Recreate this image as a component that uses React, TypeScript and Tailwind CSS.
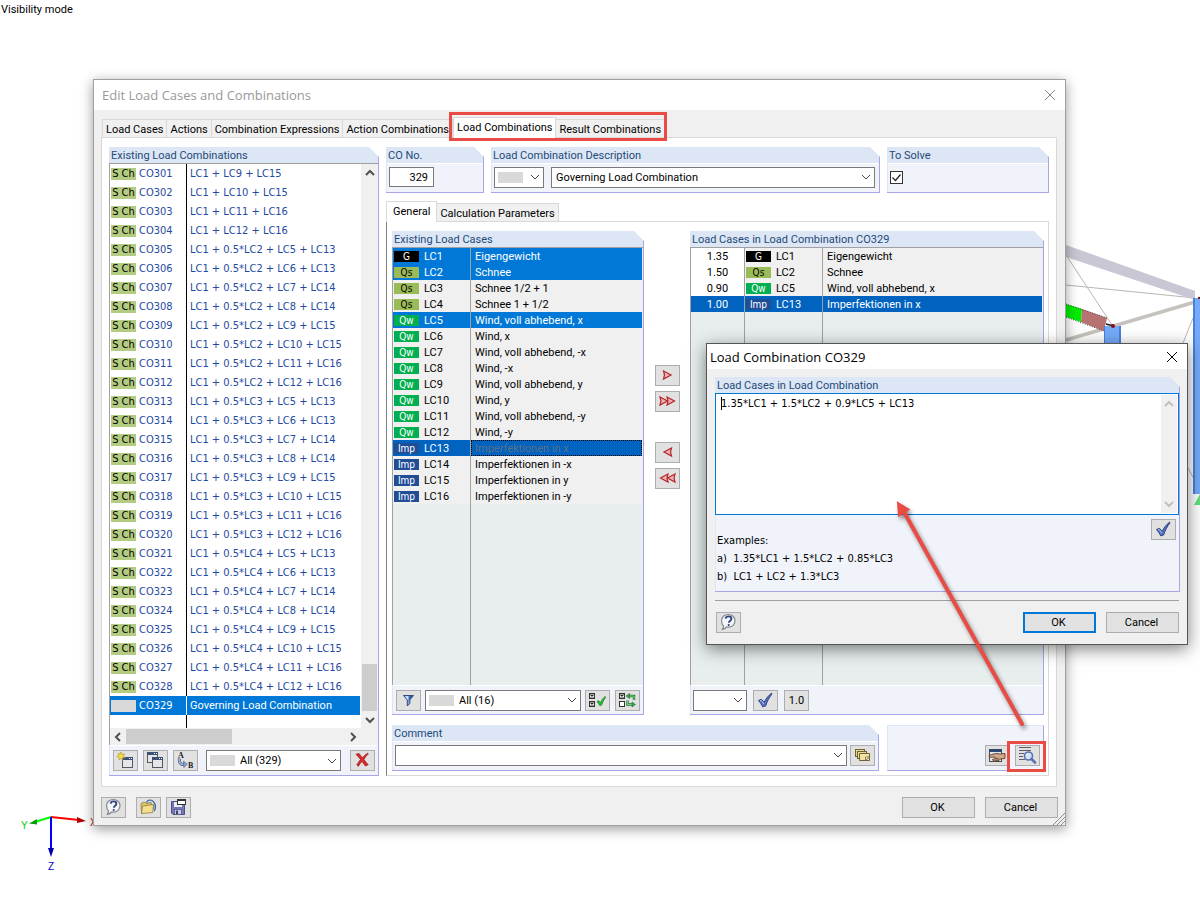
import React, { useState } from 'react';

/* ---------------- DATA ---------------- */
type Kind = 'G' | 'Qs' | 'Qw' | 'Imp';

interface LoadCase {
  kind: Kind;
  id: string;
  name: string;
  factor?: string;
}

const KIND_STYLE: Record<Kind, string> = {
  G: 'bg-black text-white',
  Qs: 'bg-[#9bbb59] text-black',
  Qw: 'bg-[#00b050] text-white',
  Imp: 'bg-[#1f4e97] text-white',
};

const LOAD_CASES: LoadCase[] = [
  { kind: 'G', id: 'LC1', name: 'Eigengewicht' },
  { kind: 'Qs', id: 'LC2', name: 'Schnee' },
  { kind: 'Qs', id: 'LC3', name: 'Schnee 1/2 + 1' },
  { kind: 'Qs', id: 'LC4', name: 'Schnee 1 + 1/2' },
  { kind: 'Qw', id: 'LC5', name: 'Wind, voll abhebend, x' },
  { kind: 'Qw', id: 'LC6', name: 'Wind, x' },
  { kind: 'Qw', id: 'LC7', name: 'Wind, voll abhebend, -x' },
  { kind: 'Qw', id: 'LC8', name: 'Wind, -x' },
  { kind: 'Qw', id: 'LC9', name: 'Wind, voll abhebend, y' },
  { kind: 'Qw', id: 'LC10', name: 'Wind, y' },
  { kind: 'Qw', id: 'LC11', name: 'Wind, voll abhebend, -y' },
  { kind: 'Qw', id: 'LC12', name: 'Wind, -y' },
  { kind: 'Imp', id: 'LC13', name: 'Imperfektionen in x' },
  { kind: 'Imp', id: 'LC14', name: 'Imperfektionen in -x' },
  { kind: 'Imp', id: 'LC15', name: 'Imperfektionen in y' },
  { kind: 'Imp', id: 'LC16', name: 'Imperfektionen in -y' },
];

const ASSIGNED: LoadCase[] = [
  { kind: 'G', id: 'LC1', name: 'Eigengewicht', factor: '1.35' },
  { kind: 'Qs', id: 'LC2', name: 'Schnee', factor: '1.50' },
  { kind: 'Qw', id: 'LC5', name: 'Wind, voll abhebend, x', factor: '0.90' },
  { kind: 'Imp', id: 'LC13', name: 'Imperfektionen in x', factor: '1.00' },
];

const WIND_PAIRS = [
  'LC5 + LC13',
  'LC6 + LC13',
  'LC7 + LC14',
  'LC8 + LC14',
  'LC9 + LC15',
  'LC10 + LC15',
  'LC11 + LC16',
  'LC12 + LC16',
];

const COMBINATIONS = [
  ...WIND_PAIRS.slice(4).map((pair) => `LC1 + ${pair}`),
  ...['LC2', 'LC3', 'LC4'].flatMap((snow) => WIND_PAIRS.map((pair) => `LC1 + 0.5*${snow} + ${pair}`)),
  'Governing Load Combination',
].map((text, i) => ({ no: `CO${301 + i}`, text }));

/* ---------------- ICONS ---------------- */
// every button icon is drawn on the 23x19 face of its button
const Face: React.FC<{ children: React.ReactNode }> = ({ children }) => (
  <svg viewBox="0 0 23 19" className="block w-[23px] h-[19px]" aria-hidden="true">
    {children}
  </svg>
);

const MiniWindow: React.FC<{ x: number; y: number }> = ({ x, y }) => (
  <g>
    <rect x={x + 0.5} y={y + 0.5} width="10" height="10" fill="#e4e6ea" stroke="#55585e" />
    <rect x={x} y={y} width="11" height="3" fill="#3c4f74" />
    <rect x={x + 7} y={y + 1} width="1" height="1" fill="#fff" />
    <rect x={x + 9} y={y + 1} width="1" height="1" fill="#fff" />
  </g>
);

const NewIcon = () => (
  <Face>
    <MiniWindow x={8} y={6} />
    <path d="M7 1l1 2.6 2.6-.8-1.5 2.2 2.1 1.6-2.7.2L8.400 9.400 7 7.200 5 9l.2-2.700L2.800 5.600l2.300-1.200L4 2.300l2.200 1z" fill="#f7dc4a" stroke="#b8941c" strokeWidth=".6" />
  </Face>
);

const CopyIcon = () => (
  <Face>
    <MiniWindow x={3} y={1} />
    <MiniWindow x={8} y={6} />
  </Face>
);

const RenumberIcon = () => (
  <Face>
    <text x="4" y="7" fontSize="8" fontWeight="700" fontFamily="Liberation Serif, serif" fill="#222">A</text>
    <text x="14" y="17" fontSize="8" fontWeight="700" fontFamily="Liberation Serif, serif" fill="#222">B</text>
    <path d="M5.500 7.500c-.8 4 1.500 6.500 5 6" fill="none" stroke="#51648f" strokeWidth="3" />
    <path d="M5.500 7.500c-.8 4 1.500 6.500 5 6" fill="none" stroke="#a9b9db" strokeWidth="1.400" />
    <path d="M9.500 10.200l3.800 3-3.500 3.300z" fill="#8ea3cf" stroke="#51648f" strokeWidth=".7" />
  </Face>
);

const DeleteIcon = () => (
  <Face>
    <path d="M5 3.200l3-.7c1.200 1.500 2.200 3 3.300 4.300 1.500-1.700 3.200-3.300 5.200-4.600l.8.600c-1.800 1.800-3.200 3.600-4.400 5.500 1.200 1.900 2.600 3.700 4.300 5.400l-2.800 1.300c-1.300-1.500-2.400-3.100-3.400-4.700-1.300 1.600-2.500 3.200-3.700 5l-1.500-1.300c1-1.900 2.300-3.700 3.700-5.500C8.200 6.800 6.800 5 5 3.200z" fill="#de2a2a" stroke="#8f1414" strokeWidth=".7" />
  </Face>
);

const HelpIcon = () => (
  <Face>
    <path d="M11.300 1.500c4 0 6.700 2.700 6.700 6.300s-2.700 6.400-6.700 6.400c-.6 0-1.200-.1-1.700-.2-1.300 1.500-2.700 2.300-4.300 2.500.8-1 1.200-2.200 1.200-3.500C5.200 11.800 4.600 10 4.600 7.800c0-3.600 2.700-6.300 6.700-6.300z" fill="#f4f6fa" stroke="#85878d" strokeWidth="1.200" />
    <path d="M8.600 5.600c.3-1.500 1.400-2.200 2.900-2.200 1.700 0 2.900.9 2.900 2.300 0 1.300-.9 1.800-1.600 2.400-.6.500-.9.900-.9 1.600" fill="none" stroke="#2d4480" strokeWidth="1.900" />
    <circle cx="11.700" cy="12" r="1.100" fill="#2d4480" />
  </Face>
);

const OpenIcon = () => (
  <Face>
    <path d="M9 4.500c2-3.500 7-3.300 8.800.8.900 2.200.9 5-.3 8" fill="#8fabd6" stroke="#35578f" />
    <path d="M11 4.500c2-1.500 4-1 5 1.500" fill="none" stroke="#e3ecf9" strokeWidth="1.200" />
    <path d="M4.500 15.500l-.5-10 3.500-1.500 1.500 1.500 5-1 .8 3.500z" fill="#e0c967" stroke="#93793a" strokeWidth=".8" />
    <path d="M4.500 15.500l1-7.500 11-1.500-.8 8z" fill="#f3e08e" stroke="#93793a" strokeWidth=".8" />
  </Face>
);

const SaveIcon = () => (
  <Face>
    <path d="M4.500 3.500h13v13H6l-1.500-1.500z" fill="#7377b8" stroke="#4a4e86" />
    <rect x="7" y="4" width="8" height="5" fill="#eceef6" />
    <rect x="7.500" y="11.500" width="7" height="5" fill="#c9ccdc" stroke="#3b3f74" strokeWidth=".6" />
    <rect x="9" y="12.500" width="2" height="3.500" fill="#3b3f74" />
    <rect x="10.500" y="1.500" width="8" height="5" fill="#fff" stroke="#333" />
    <rect x="10" y="1" width="9" height="2" fill="#333" />
  </Face>
);

const FilterIcon = () => (
  <Face>
    <path d="M6.500 4.500h10L12.800 9v3.500L10.300 15V9z" fill="#7ba3e6" stroke="#23406f" strokeWidth=".9" />
    <path d="M8 5.300h3L11 9z" fill="#d6e5fb" />
    <path d="M12 9.500l3.500-4.500h-3z" fill="#2d5296" />
  </Face>
);

const TickBox: React.FC<{ x: number; y: number; ticked?: boolean }> = ({ x, y, ticked }) => (
  <g>
    <rect x={x + 0.5} y={y + 0.5} width="5" height="5" fill="#fff" stroke="#333" />
    {ticked && <path d={`M${x + 1.5} ${y + 1.500}l3 3m0-3l-3 3`} stroke="#222" strokeWidth="1.200" />}
  </g>
);

const SelectAllIcon = () => (
  <Face>
    <TickBox x={3} y={2} ticked />
    <TickBox x={3} y={10} ticked />
    <path d="M11 10.500l1.800-.8 1.600 2.200c1-2.500 2.500-4.600 4.600-6.400l.7.500c-1.800 2.500-3.200 5.200-4.200 8.200l-1.800.3c-.8-1.500-1.700-2.800-2.700-4z" fill="#23c437" stroke="#14751f" strokeWidth=".7" />
  </Face>
);

const InvertIcon = () => (
  <Face>
    <TickBox x={3} y={2} ticked />
    <TickBox x={3} y={10} />
    <path d="M12.500 5h5.500v4M11.500 9.500v4H17" fill="none" stroke="#1f7a2e" strokeWidth="2.400" />
    <path d="M12.500 5h5.500v4M11.500 9.500v4H17" fill="none" stroke="#86d890" strokeWidth=".9" />
    <path d="M13.500 2.500L10 5l3.500 2.500zM16 11l3.500 2.500L16 16z" fill="#3fa84e" stroke="#1f6f2c" strokeWidth=".6" />
  </Face>
);

const ApplyIcon = () => (
  <Face>
    <path d="M4.500 9.500l3-1.200 2.600 3.200c1.600-3.600 4-6.600 7.400-9.300l.6.500c-2.900 3.800-5.100 7.800-6.500 12.300l-2.900.8C7.500 13.300 6.100 11.300 4.500 9.500z" fill="#5577cc" stroke="#24366e" strokeWidth=".9" />
    <path d="M6 9.800l1.200-.4L9.800 13" fill="none" stroke="#b6c8f2" strokeWidth=".9" />
  </Face>
);

const NotesIcon = () => (
  <Face>
    <rect x="4.500" y="3.500" width="9" height="7" fill="#e8d894" stroke="#6f6233" />
    <rect x="6.500" y="5.500" width="9" height="7" fill="#e8d894" stroke="#6f6233" />
    <path d="M8.500 7.500h10v7h-10z" fill="#f1e3a6" stroke="#6f6233" />
    <path d="M14.500 14.500v-3.500h4z" fill="#fff8d4" stroke="#6f6233" strokeWidth=".8" />
  </Face>
);

const HandIcon = () => (
  <Face>
    <rect x="3.500" y="3.500" width="12" height="12" fill="#e6e8ec" stroke="#4a4d52" />
    <rect x="3" y="3" width="13" height="3" fill="#2f4670" />
    <path d="M3 9.500c3-1.200 5.500-1.800 8-2l3 .5 5-.5v5l-4 .3-3 2-4.500.2-1-1.500 3-1-.6-1.500-5.400.3z" fill="#d2a98b" stroke="#5b3d2b" strokeWidth=".9" />
    <path d="M9 12.800l4-.6M9.500 14.200l3-.4" stroke="#5b3d2b" strokeWidth=".7" />
  </Face>
);

const InspectIcon = () => (
  <Face>
    <path d="M3 1.500h12M3 4.500h12M3 7.500h5M3 10.500h4M3 13.500h6" stroke="#5c5f66" />
    <circle cx="12.500" cy="10" r="4" fill="#d4e1f7" stroke="#5873b0" strokeWidth="1.600" />
    <path d="M15.500 13l3.500 3.500" stroke="#5873b0" strokeWidth="2.600" strokeLinecap="round" />
    <path d="M10.800 9.500c.3-1 1-1.500 2-1.500" fill="none" stroke="#fff" />
  </Face>
);

const Arrowheads: React.FC<{ dir: 'left' | 'right'; double?: boolean }> = ({ dir, double }) => (
  <Face>
    <g transform={dir === 'left' ? 'translate(23 0) scale(-1 1)' : undefined}>
      {(double ? [4, 11] : [7.5]).map((x) => (
        <path key={x} d={`M${x} 5l7.500 4-7.500 4 1-4z`} fill="#f0b4b4" stroke="#b3262d" strokeWidth="1.200" />
      ))}
    </g>
  </Face>
);

const Chevron: React.FC<{ className?: string; dir?: 'up' | 'down' | 'left' | 'right' }> = ({
  className = '',
  dir = 'down',
}) => {
  const d = {
    up: 'M1 7l4-4 4 4',
    down: 'M1 3l4 4 4-4',
    left: 'M7 1L3 5l4 4',
    right: 'M3 1l4 4-4 4',
  }[dir];
  return (
    <svg viewBox="0 0 10 10" className={`block size-[10px] shrink-0 ${className}`} aria-hidden="true">
      <path d={d} fill="none" stroke="currentColor" />
    </svg>
  );
};

const CloseIcon = () => (
  <svg viewBox="0 0 12 12" className="block size-3" aria-hidden="true">
    <path d="M1 1l10 10M11 1L1 11" stroke="currentColor" fill="none" />
  </svg>
);

/* ---------------- CONTROLS ---------------- */
const IconButton: React.FC<{ label: string; children: React.ReactNode; className?: string }> = ({
  label,
  children,
  className = '',
}) => (
  <button
    type="button"
    aria-label={label}
    className={`flex h-[21px] w-[25px] shrink-0 items-center justify-center border border-[#adadad] bg-[#e1e1e1] ${className}`}
  >
    {children}
  </button>
);

const PushButton: React.FC<{ children: React.ReactNode; primary?: boolean }> = ({ children, primary }) => (
  <button
    type="button"
    className={`h-[21px] w-[73px] bg-[#e1e1e1] pt-px pr-[2px] text-center ${
      primary ? 'border-2 border-[#0078d7]' : 'border border-[#adadad]'
    }`}
  >
    {children}
  </button>
);

interface ComboProps {
  id: string;
  label: string;
  options: string[];
  swatch?: boolean;
  className?: string;
}

const Combo: React.FC<ComboProps> = ({ id, label, options, swatch, className = '' }) => (
  <div className={`relative flex h-[21px] items-center border border-[#7a7a7a] bg-white pl-[3px] ${className}`}>
    {swatch && <span className="h-[11px] w-[25px] shrink-0 bg-[#d9d9d9]" />}
    <select
      id={id}
      aria-label={label}
      className={`h-full min-w-0 flex-1 appearance-none bg-transparent pt-px outline-none ${swatch ? 'pl-[5px]' : 'pl-px'}`}
    >
      {options.map((o) => (
        <option key={o}>{o}</option>
      ))}
    </select>
    <Chevron className="pointer-events-none absolute right-[3px] text-[#444]" />
  </div>
);

interface GroupProps {
  title?: string;
  labelFor?: string;
  className?: string;
  children: React.ReactNode;
}

// titled box with the cut upper right corner
const Group: React.FC<GroupProps> = ({ title, labelFor, className = '', children }) => (
  <section
    className={`flex flex-col border-r border-b border-[#a8a6e6] [clip-path:polygon(0_0,calc(100%-10px)_0,100%_10px,100%_100%,0_100%)] ${className}`}
  >
    <div className="h-4 bg-[#dce6f4] pl-[2px] leading-[18px] text-[#1e4a7a]">
      {labelFor ? <label htmlFor={labelFor}>{title}</label> : <h2>{title}</h2>}
    </div>
    {children}
  </section>
);

const GROUP_BODY = 'flex shrink-0 items-center border-t border-l border-t-white border-l-[#dce6f4] bg-[#f0f4fa]';

const Badge: React.FC<{ kind: Kind }> = ({ kind }) => (
  <span
    className={`h-[11px] w-[25px] self-center text-center text-[10px] leading-[11px] font-['DejaVu_Sans_Condensed','DejaVu_Sans',sans-serif] ${KIND_STYLE[kind]}`}
  >
    {kind}
  </span>
);

/* ---------------- LEFT LIST ---------------- */
const CombinationList: React.FC = () => {
  const [selected, setSelected] = useState('CO329');

  return (
    <Group title="Existing Load Combinations" className="w-[270px] shrink-0">
      <div className="border-t border-l border-[#a0a0a0] bg-white">
        <div className="flex h-[564px]">
          <table className="mr-px h-full flex-1 table-fixed border-separate border-spacing-0 text-[#1f4aa0] font-['DejaVu_Sans_Condensed','DejaVu_Sans',sans-serif]">
            <colgroup>
              <col className="w-[77px]" />
              <col />
            </colgroup>
            <tbody>
              {COMBINATIONS.map(({ no, text }) => {
                const on = no === selected;
                return (
                  <tr key={no} onClick={() => setSelected(no)} className={`h-[19px] ${on ? 'bg-[#0078d7] text-white' : ''}`}>
                    <td className={`border-r p-0 pt-px pl-px ${on ? 'border-white' : 'border-black'}`}>
                      <div className="flex items-center gap-[3px]">
                        <span className={`h-3 w-[25px] text-center leading-3 text-black ${on ? 'bg-[#d9d9d9]' : 'bg-[#b4cc82]'}`}>
                          {on ? '' : 'S Ch'}
                        </span>
                        {no}
                      </div>
                    </td>
                    <td className={`p-0 pt-px pl-[3px] whitespace-nowrap ${text.includes('+') ? '' : 'font-[Roboto,Arial,sans-serif]'}`}>
                      {text}
                    </td>
                  </tr>
                );
              })}
              <tr>
                <td className="border-r border-black p-0" />
                <td className="p-0" />
              </tr>
            </tbody>
          </table>
          <div className="flex w-[17px] flex-col items-center bg-[#f0f0f0] pt-1 pb-[3px] text-[#505050]">
            <Chevron dir="up" className="stroke-2" />
            <div className="mt-auto mb-1 h-[47px] w-[15px] bg-[#cdcdcd]" />
            <Chevron className="stroke-2" />
          </div>
        </div>
        <div className="flex h-[17px] items-center bg-[#f0f0f0] text-[#505050]">
          <Chevron dir="left" className="mx-[3px] stroke-2" />
          <div className="h-[15px] w-[106px] bg-[#cdcdcd]" />
          <Chevron dir="right" className="mr-5 ml-auto stroke-2" />
        </div>
      </div>
      <div className={`${GROUP_BODY} h-[30px] px-[3px]`}>
        <div className="flex gap-[5px]">
          <IconButton label="New load combination"><NewIcon /></IconButton>
          <IconButton label="Copy load combination"><CopyIcon /></IconButton>
          <IconButton label="Renumber"><RenumberIcon /></IconButton>
        </div>
        <Combo id="co-filter" label="Filter combinations" options={['All (329)']} swatch className="ml-2 w-[135px]" />
        <IconButton label="Delete" className="ml-auto"><DeleteIcon /></IconButton>
      </div>
    </Group>
  );
};

/* ---------------- LOAD CASE TABLES ---------------- */
const CaseTable: React.FC<{ rows: LoadCase[]; selected: string[]; focused?: string; ghost?: boolean }> = ({
  rows,
  selected,
  focused,
  ghost,
}) => {
  const withFactor = rows[0].factor !== undefined;

  return (
    <div className="h-[438px] border-t border-l border-[#a0a0a0] bg-[#e8eeee] pr-px">
      <table className="h-full w-full table-fixed border-separate border-spacing-0">
        <colgroup>
          {withFactor && <col className="w-[54px]" />}
          <col className="w-[78px]" />
          <col />
        </colgroup>
        <tbody>
          {rows.map((row) => {
            const isFocused = row.id === focused;
            const isOn = selected.includes(row.id);
            const tone = isFocused ? 'bg-[#0063c0] text-white' : isOn ? 'bg-[#0078d7] text-white' : 'bg-[#f0f0f0] text-black';
            return (
              <tr key={row.id} className={`h-4 ${tone}`}>
                {withFactor && (
                  <td className={`border-r border-[#a0a0a0] p-0 text-center ${isFocused ? '' : 'bg-white'}`}>
                    <div className="h-4 leading-[18px]">{row.factor}</div>
                  </td>
                )}
                <td className="border-r border-[#a0a0a0] p-0 pl-px">
                  <div className="flex h-4 gap-[5px] leading-[18px]">
                    <Badge kind={row.kind} />
                    {row.id}
                  </div>
                </td>
                <td
                  className={`p-0 pl-1 whitespace-nowrap ${
                    isFocused && ghost ? 'text-[#5c6f86] outline outline-dotted -outline-offset-1 outline-black' : ''
                  }`}
                >
                  <div className="h-4 leading-[18px]">{row.name}</div>
                </td>
              </tr>
            );
          })}
          <tr>
            {withFactor && <td className="border-r border-[#a0a0a0] p-0" />}
            <td className="border-r border-[#a0a0a0] p-0" />
            <td className="p-0" />
          </tr>
        </tbody>
      </table>
    </div>
  );
};

/* ---------------- TABS ---------------- */
interface TabProps {
  label: string;
  active?: boolean;
  first?: boolean;
  wide?: boolean;
}

const Tab: React.FC<TabProps> = ({ label, active, first, wide }) => (
  <button
    type="button"
    role="tab"
    aria-selected={!!active}
    className={`relative border-t border-r border-[#d9d9d9] whitespace-nowrap ${wide ? 'px-[6px]' : 'px-[3px]'} ${
      first || active ? 'border-l' : ''
    } ${active ? '-mb-px h-[21px] bg-white' : 'h-[18px] bg-[#f0f0f0] pt-[2px]'}`}
  >
    {label}
  </button>
);

/* ---------------- MAIN DIALOG ---------------- */
const GeneralPage: React.FC = () => (
  <div className="border border-[#d9d9d9] border-l-[#808080] bg-white pt-[9px] pr-1 pb-1 pl-[5px]">
    <div className="flex">
      <Group title="Existing Load Cases" className="w-[252px] shrink-0">
        <CaseTable rows={LOAD_CASES} selected={['LC1', 'LC2', 'LC5']} focused="LC13" ghost />
        <div className={`${GROUP_BODY} h-[29px] px-[3px]`}>
          <IconButton label="Filter"><FilterIcon /></IconButton>
          <Combo id="lc-filter" label="Filter load cases" options={['All (16)']} swatch className="ml-1 flex-1" />
          <IconButton label="Select all" className="ml-1"><SelectAllIcon /></IconButton>
          <IconButton label="Invert selection" className="ml-[5px]"><InvertIcon /></IconButton>
        </div>
      </Group>

      <div className="mx-[10px] flex shrink-0 flex-col gap-[5px] pt-[134px] pl-px">
        <IconButton label="Add"><Arrowheads dir="right" /></IconButton>
        <IconButton label="Add all"><Arrowheads dir="right" double /></IconButton>
        <IconButton label="Remove" className="mt-[25px]"><Arrowheads dir="left" /></IconButton>
        <IconButton label="Remove all"><Arrowheads dir="left" double /></IconButton>
      </div>

      <Group title="Load Cases in Load Combination CO329" className="min-w-0 flex-1">
        <CaseTable rows={ASSIGNED} selected={[]} focused="LC13" />
        <div className={`${GROUP_BODY} h-[29px] gap-[6px] pl-[2px]`}>
          <Combo id="factor" label="Factor" options={['']} className="w-[54px]" />
          <IconButton label="Apply factor"><ApplyIcon /></IconButton>
          <IconButton label="Set factor to 1.0" className="pt-[2px]">1.0</IconButton>
        </div>
      </Group>
    </div>

    <div className="mt-[10px] flex gap-2">
      <Group title="Comment" labelFor="comment" className="min-w-0 flex-1">
        <div className={`${GROUP_BODY} h-[29px] gap-[3px] pr-[3px] pb-[2px] pl-[2px]`}>
          <Combo id="comment" label="Comment" options={['']} className="flex-1" />
          <IconButton label="Insert comment"><NotesIcon /></IconButton>
        </div>
      </Group>
      <div className="relative flex w-[157px] items-end justify-end gap-[5px] border border-t-[#dce6f4] border-r-[#a8a6e6] border-b-[#a8a6e6] border-l-[#dce6f4] bg-[#f0f4fa] pr-[3px] pb-1">
        <IconButton label="Edit"><HandIcon /></IconButton>
        <IconButton label="Edit combination formula"><InspectIcon /></IconButton>
        <div className="pointer-events-none absolute -right-[3px] -bottom-[2px] h-[31px] w-[39px] border-3 border-[#e94b45]" />
      </div>
    </div>
  </div>
);

const EditDialog: React.FC = () => {
  const [solve, setSolve] = useState(true);

  return (
    <div
      role="dialog"
      aria-label="Edit Load Cases and Combinations"
      className="relative mt-[79px] mr-[134px] ml-[93px] border border-[#a0a0a0] bg-[#f0f0f0] shadow-[0_3px_12px_rgba(0,0,0,0.4)]"
    >
      <div className="flex h-[30px] items-center justify-between bg-white pr-[9px] pl-2">
        <h1 className="text-[13px] text-[#999] font-['Open_Sans',sans-serif]">Edit Load Cases and Combinations</h1>
        <button type="button" aria-label="Close" className="text-[#888]"><CloseIcon /></button>
      </div>

      <div className="mr-2 ml-[7px] pt-[7px]">
        <div role="tablist" className="relative z-10 flex items-end pl-px">
          <Tab label="Load Cases" first />
          <Tab label="Actions" />
          <Tab label="Combination Expressions" />
          <Tab label="Action Combinations" />
          <div className="relative flex items-end">
            <Tab label="Load Combinations" active />
            <Tab label="Result Combinations" />
            <div className="pointer-events-none absolute -top-[5px] -right-[2px] -bottom-1 -left-1 border-3 border-[#e94b45]" />
          </div>
        </div>

        <div className="flex gap-[7px] border border-[#d9d9d9] bg-white px-[7px] pt-[9px] pb-[10px]">
          <CombinationList />

          <div className="min-w-0 flex-1">
            <div className="flex gap-[7px]">
              <Group title="CO No." labelFor="co-no" className="w-[98px] shrink-0">
                <div className={`${GROUP_BODY} h-[29px] pb-[2px] pl-[2px]`}>
                  <input id="co-no" defaultValue="329" className="h-5 w-[45px] border border-[#7a7a7a] bg-white pr-[5px] text-right" />
                </div>
              </Group>
              <Group title="Load Combination Description" labelFor="co-desc" className="min-w-0 flex-1">
                <div className={`${GROUP_BODY} h-[29px] gap-[7px] pr-1 pb-[2px] pl-[2px]`}>
                  <Combo id="co-kind" label="Design situation" options={['']} swatch className="w-[50px]" />
                  <Combo id="co-desc" label="Load Combination Description" options={['Governing Load Combination']} className="flex-1" />
                </div>
              </Group>
              <Group title="To Solve" labelFor="to-solve" className="w-[162px] shrink-0">
                <div className={`${GROUP_BODY} h-[29px] pb-px pl-[2px]`}>
                  <span className="relative size-[13px]">
                    <input
                      id="to-solve"
                      type="checkbox"
                      checked={solve}
                      onChange={(e) => setSolve(e.target.checked)}
                      className="block size-[13px] appearance-none border border-[#333] bg-white"
                    />
                    {solve && (
                      <svg viewBox="0 0 13 13" className="pointer-events-none absolute inset-0 size-[13px]" aria-hidden="true">
                        <path d="M2.500 6.500l3 3 5-6" fill="none" stroke="#222" strokeWidth="1.200" />
                      </svg>
                    )}
                  </span>
                </div>
              </Group>
            </div>

            <div role="tablist" className="relative z-10 mt-2 flex items-end">
              <Tab label="General" active wide />
              <Tab label="Calculation Parameters" />
            </div>
            <GeneralPage />
          </div>
        </div>
      </div>

      <div className="flex px-[7px] pt-[10px] pb-[7px]">
        <IconButton label="Help"><HelpIcon /></IconButton>
        <IconButton label="Open" className="ml-[10px]"><OpenIcon /></IconButton>
        <IconButton label="Save" className="ml-[5px]"><SaveIcon /></IconButton>
        <div className="ml-auto flex gap-[10px]">
          <PushButton>OK</PushButton>
          <PushButton>Cancel</PushButton>
        </div>
      </div>

      <svg viewBox="0 0 12 12" className="absolute right-0 bottom-0 size-3" aria-hidden="true">
        <path d="M0 12L12 0M4 12l8-8M8 12l4-4" stroke="#8c8c8c" />
      </svg>
    </div>
  );
};

/* ---------------- FORMULA DIALOG ---------------- */
const FormulaDialog: React.FC = () => {
  const [formula, setFormula] = useState('1.35*LC1 + 1.5*LC2 + 0.9*LC5 + LC13');

  return (
    <div
      role="dialog"
      aria-label="Load Combination CO329"
      className="absolute top-[343px] right-3 z-20 w-[482px] border border-[#555] bg-[#f0f0f0] shadow-[0_4px_16px_rgba(0,0,0,0.5)]"
    >
      <div className="flex h-[25px] items-center justify-between bg-white pr-[9px] pl-[3px]">
        <h1 className="text-[13px] font-['Open_Sans',sans-serif]">Load Combination CO329</h1>
        <button type="button" aria-label="Close" className="text-black"><CloseIcon /></button>
      </div>

      <div className="px-2 pt-2 pb-[11px]">
        <Group title="Load Cases in Load Combination" labelFor="formula" className="mr-[-1px]">
          <div className="relative flex h-[122px] border border-[#0078d7] bg-white">
            <textarea
              id="formula"
              value={formula}
              onChange={(e) => setFormula(e.target.value)}
              className="h-full flex-1 resize-none bg-white pt-[2px] pl-[5px] leading-4 outline-none font-['DejaVu_Sans_Condensed','DejaVu_Sans',sans-serif]"
            />
            <span className="absolute top-[3px] left-[5px] h-[13px] w-px bg-black" />
            <div className="my-px mr-px flex w-4 flex-col items-center justify-between bg-[#f0f0f0] py-1 text-[#c0c0c0]">
              <Chevron dir="up" className="stroke-2" />
              <Chevron className="stroke-2" />
            </div>
          </div>
          <div className="flex h-[76px] justify-between border-l border-[#dce6f4] bg-[#f0f4fa] pt-1 pr-[3px] pl-px">
            <div className="pt-[13px] leading-[18px] whitespace-pre font-['DejaVu_Sans_Condensed','DejaVu_Sans',sans-serif]">
              <p>Examples:</p>
              <p>{'a)  1.35*LC1 + 1.5*LC2 + 0.85*LC3'}</p>
              <p>{'b)  LC1 + LC2 + 1.3*LC3'}</p>
            </div>
            <IconButton label="Apply"><ApplyIcon /></IconButton>
          </div>
        </Group>

        <hr className="mt-2 mb-[11px] border-t border-[#a0a0a0]" />

        <div className="flex pl-px">
          <IconButton label="Help"><HelpIcon /></IconButton>
          <div className="ml-auto flex gap-[10px]">
            <PushButton primary>OK</PushButton>
            <PushButton>Cancel</PushButton>
          </div>
        </div>
      </div>
    </div>
  );
};

/* ---------------- MODEL VIEW ---------------- */
const Structure: React.FC = () => (
  <svg viewBox="0 0 160 280" className="absolute top-[240px] right-0 h-[280px] w-[160px]" aria-hidden="true">
    <path d="M26 45L155 58M26 15l46 70M143 103l10-25M148 228l6 11" stroke="#b9b7b2" fill="none" />
    <path d="M26 100L155 62" stroke="#c6c2bd" strokeWidth="3.500" fill="none" />
    <path d="M26 5l129 46v9L26 17z" fill="#c8c7d3" />
    <path d="M26 64l16 5-1 13-15-5z" fill="#00ee00" />
    <path d="M42 69l25 9-3 13-23-9z" fill="#b77272" />
    <path d="M26 64l41 14M26 77l38 14" stroke="#444" strokeDasharray="1 1.500" fill="none" />
    <path d="M64 86h17v24H64z" fill="#74aaf8" />
    <path d="M79 86h2v24h-2zM64 86h1v24h-1z" fill="#4a80dc" />
    <path d="M66 84l8 2" stroke="#222" strokeWidth="1.500" />
    <circle cx="73" cy="86" r="2" fill="#8e0f0f" />
    <path d="M153 58h7v196h-7z" fill="#74aaf8" />
    <path d="M153 58h2v196h-2z" fill="#4a80dc" />
    <path d="M158 57h2v2h-2z" fill="#8e0f0f" />
    <path d="M160 254l-6 11h6z" fill="#5fe07a" />
  </svg>
);

const Axes: React.FC = () => (
  <svg viewBox="0 0 90 70" className="absolute top-[808px] left-[15px] h-[70px] w-[90px]" aria-hidden="true">
    <path d="M36 9l28 3" stroke="#f00" strokeWidth="2" />
    <path d="M62 9l9 4-9 2z" fill="#b00000" />
    <path d="M36 9l-16 5" stroke="#0f0" strokeWidth="2" />
    <path d="M22 11l-8 4.500 8 1z" fill="#00a000" />
    <path d="M36 9v34" stroke="#00f" strokeWidth="2" />
    <path d="M33 40h6l-3 9z" fill="#0000b0" />
    <g fontSize="10" fontFamily="Liberation Sans, Arial, sans-serif">
      <text x="6" y="21" fill="#0c0">Y</text>
      <text x="75" y="18" fill="#c00">X</text>
      <text x="33" y="62" fill="#00c">Z</text>
    </g>
  </svg>
);

// callout from the toolbar button to the formula box
const Callout: React.FC = () => (
  <svg
    viewBox="0 0 150 240"
    className="pointer-events-none absolute top-[495px] right-[160px] z-30 h-[240px] w-[150px] drop-shadow-[2px_3px_2px_rgba(0,0,0,0.45)]"
    aria-hidden="true"
  >
    <path d="M14 17l118 212" stroke="#e94b45" strokeWidth="4" strokeLinecap="round" />
    <path d="M8 8l10.500 6.500-9.500 6z" fill="#e94b45" stroke="#e94b45" strokeWidth="2" />
  </svg>
);

/* ---------------- APP ---------------- */
const App: React.FC = () => (
  <div className="relative min-h-screen overflow-hidden bg-white text-[11px] leading-[14px] text-black font-[Roboto,Arial,sans-serif]">
    <p className="absolute top-[3px] left-px">Visibility mode</p>
    <Structure />
    <Axes />
    <EditDialog />
    <FormulaDialog />
    <Callout />
  </div>
);

export default App;
